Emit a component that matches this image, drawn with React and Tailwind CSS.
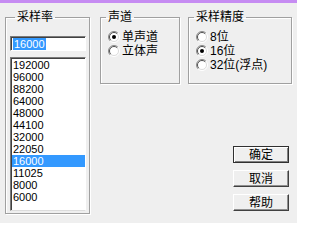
import React from 'react';

const rates = ['192000', '96000', '88200', '64000', '48000', '44100', '32000', '22050', '16000', '11025', '8000', '6000'];

// classic etched group box
const Group = ({ label, className, children }) => (
  <fieldset className={`border border-[#a0a0a0] shadow-[inset_1px_1px_0_#fff,1px_1px_0_#fff] ${className}`}>
    <legend className="ml-[5px] px-[2px] text-[12px] leading-[14px]">{label}</legend>
    {children}
  </fieldset>
);

const Radio = ({ checked, label }) => (
  <div className="flex items-center h-[14px] pl-[7px] gap-[2px]">
    <svg width="12" height="12" viewBox="0 0 12 12" className="shrink-0">
      <circle cx="6" cy="6" r="5" fill="#fff" />
      <path d="M9.9 2.1 A5.5 5.5 0 0 0 2.1 9.9" fill="none" stroke="#8a8a8a" strokeWidth="1" />
      <path d="M9.9 2.1 A5.5 5.5 0 0 1 2.1 9.9" fill="none" stroke="#fff" strokeWidth="1" />
      <path d="M9.2 2.8 A4.5 4.5 0 0 0 2.8 9.2" fill="none" stroke="#505050" strokeWidth="1" />
      <path d="M9.2 2.8 A4.5 4.5 0 0 1 2.8 9.2" fill="none" stroke="#dcdcdc" strokeWidth="1" />
      {checked && <circle cx="6" cy="6" r="2" fill="#000" />}
    </svg>
    <span className="text-[12px] leading-[14px] whitespace-nowrap">{label}</span>
  </div>
);

const Button = ({ label, primary }) => (
  <button
    className={
      primary
        ? 'w-[56px] h-[17px] flex items-center justify-center border border-[#303030] bg-[#efefef] shadow-[inset_1px_1px_0_#fff,inset_-1px_-1px_0_#808080] text-[12px] leading-[14px]'
        : 'w-[56px] h-[17px] flex items-center justify-center border border-t-white border-l-white border-r-[#404040] border-b-[#404040] bg-[#efefef] shadow-[inset_-1px_-1px_0_#909090] text-[12px] leading-[14px]'
    }
  >
    {label}
  </button>
);

const App = () => {
  return (
    <div className="w-[297px] h-[223px] overflow-hidden bg-[#efefef] text-black flex flex-col font-['Liberation_Sans','Noto_Sans_CJK_SC',sans-serif]">
      {/* title bar edge */}
      <div className="h-[3px] bg-[#c68cf2]" />

      <div className="flex pt-[7px] pl-[5px]">
        {/* sample rate */}
        <Group label="采样率" className="w-[85px] pl-[4px] pt-[12px] pb-[2px]">
          <div className="w-[76px] h-[15px] flex items-center pl-[2px] bg-white border border-t-[#7a7a7a] border-l-[#7a7a7a] border-r-white border-b-white shadow-[inset_1px_1px_0_#404040]">
            <span className="bg-[#3399ff] text-white text-[11px] leading-[12px] px-[1px]">16000</span>
          </div>
          <div className="mt-[6px] w-[76px] h-[154px] bg-white border border-t-[#7a7a7a] border-l-[#7a7a7a] border-r-white border-b-[#dcdcdc] shadow-[inset_1px_1px_0_#404040] pt-[1px] pl-[1px]">
            {rates.map((r) => (
              <div
                key={r}
                className={
                  r === '16000'
                    ? 'h-[12px] pl-[1px] text-[11px] leading-[12px] bg-[#3399ff] text-white'
                    : 'h-[12px] pl-[1px] text-[11px] leading-[12px]'
                }
              >
                {r}
              </div>
            ))}
          </div>
        </Group>

        <div className="ml-[10px] flex flex-col">
          <div className="flex gap-[8px]">
            <Group label="声道" className="w-[80px] h-[74px] pt-[6px]">
              <Radio checked label="单声道" />
              <Radio label="立体声" />
            </Group>
            <Group label="采样精度" className="w-[104px] h-[74px] pt-[6px]">
              <Radio label="8位" />
              <Radio checked label="16位" />
              <Radio label="32位(浮点)" />
            </Group>
          </div>

          <div className="self-end mr-[3px] mt-[62px] flex flex-col gap-[7px]">
            <Button primary label="确定" />
            <Button label="取消" />
            <Button label="帮助" />
          </div>
        </div>
      </div>
    </div>
  );
};

export default App;
